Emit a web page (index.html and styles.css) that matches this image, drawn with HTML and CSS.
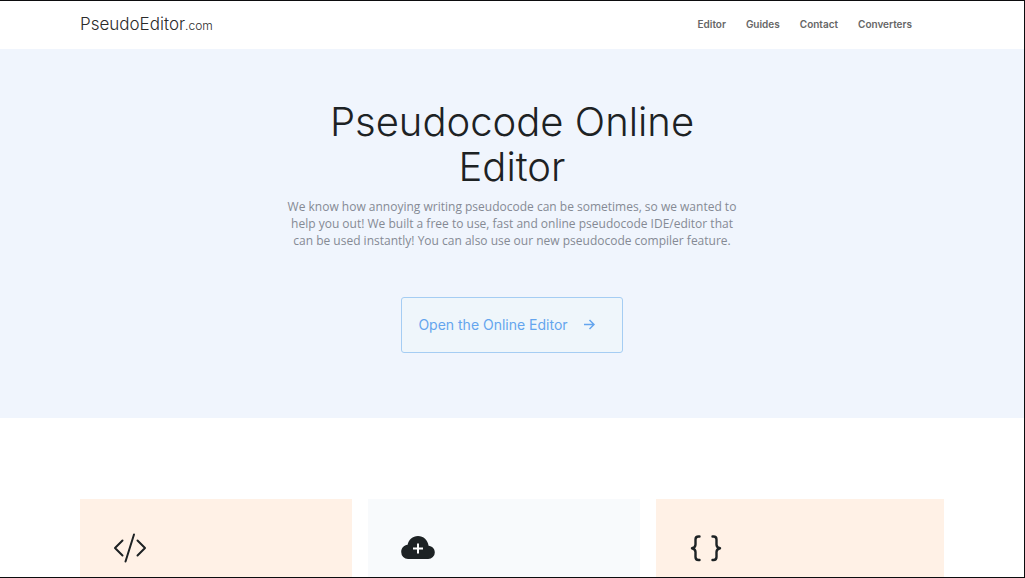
FILE: index.html
```
<!DOCTYPE html>
<html lang="en">
<head>
	<meta charset="utf-8">
	<meta name="viewport" content="width=device-width, initial-scale=1">
	<title>PseudoEditor.com | Pseudocode Online Editor</title>
	<link rel="stylesheet" href="styles.css">
</head>
<body>
	<header class="header">
		<div class="container header-inner">
			<a href="#" class="logo">PseudoEditor<span class="logo-small">.com</span></a>
			<nav class="nav">
				<a href="#">Editor</a>
				<a href="#">Guides</a>
				<a href="#">Contact</a>
				<a href="#">Converters</a>
			</nav>
		</div>
	</header>

	<section class="hero">
		<h1>Pseudocode Online<br>Editor</h1>
		<p>We know how annoying writing pseudocode can be sometimes, so we wanted to<br>
		help you out! We built a free to use, fast and online pseudocode IDE/editor that<br>
		can be used instantly! You can also use our new pseudocode compiler feature.</p>
		<a href="#" class="btn">
			<span>Open the Online Editor</span>
			<svg class="arrow" viewBox="0 0 12 12" aria-hidden="true">
				<path d="M1 6.5H10.5M6.5 2L11 6.5L6.5 11"/>
			</svg>
		</a>
	</section>

	<main class="features">
		<div class="container cards">
			<div class="card card-peach">
				<svg class="icon" viewBox="0 0 34 34" aria-hidden="true">
					<path d="M9.5 9.5L2 17L9.5 24.5M24.5 9.5L32 17L24.5 24.5M21 3.5L12.5 30.5"/>
				</svg>
			</div>
			<div class="card card-grey">
				<svg class="icon" viewBox="0 0 34 34" aria-hidden="true">
					<path class="cloud" d="M7 28A6.8 7 0 0 1 .2 21C.2 17 3 14.2 6.6 13.8C7.6 8.6 11.6 5 17 5C22.4 5 27 9.2 27.6 14.8C31 15.2 33.8 17.8 33.8 21.4A6.6 6.6 0 0 1 27.2 28Z"/>
					<path class="plus" d="M17 12.5V22.5M12 17.5H22"/>
				</svg>
			</div>
			<div class="card card-peach">
				<svg class="icon thick" viewBox="0 0 34 34" aria-hidden="true">
					<path d="M10.5 5.5H9.5Q6.5 5.5 6.5 8.5V13.5Q6.5 16.5 3 17.2Q6.5 17.9 6.5 21V26Q6.5 29 9.5 29H10.5M23.5 5.5H24.5Q27.5 5.5 27.5 8.5V13.5Q27.5 16.5 31 17.2Q27.5 17.9 27.5 21V26Q27.5 29 24.5 29H23.5"/>
				</svg>
			</div>
		</div>
	</main>
</body>
</html>
```
FILE: styles.css
```
*{
	box-sizing: border-box;
}
body{
	margin: 0;
	height: 100vh;
	overflow: hidden;
	display: flex;
	flex-direction: column;
	border: 1px solid #0c0c0e;
	border-left: none;
	background: #fff;
	color: #1d2224;
	font-family: Inter, "Open Sans", sans-serif;
}
a{
	text-decoration: none;
}
.container{
	width: 100%;
	padding: 0 80px;
}

/* top bar */
.header{
	flex: none;
}
.header-inner{
	display: flex;
	align-items: center;
	justify-content: space-between;
	height: 48px;
	padding-bottom: 2px;
}
.logo{
	color: #2b2b2b;
	font-size: 17px;
	font-weight: 300;
}
.logo-small{
	font-size: 12px;
}
.nav{
	display: flex;
	gap: 20px;
	padding-right: 32px;
}
.nav a{
	color: #666;
	font-size: 10px;
	font-weight: 600;
}

/* hero */
.hero{
	flex: none;
	padding: 50px 16px 65px;
	background: #f0f5fd;
	text-align: center;
}
h1{
	margin: 0 0 9px;
	font-size: 40px;
	line-height: 45px;
	font-weight: 300;
}
.hero p{
	margin: 0 0 48px;
	color: #858a94;
	font-family: "Open Sans", sans-serif;
	font-size: 12px;
	line-height: 17px;
}
.btn{
	display: inline-flex;
	align-items: center;
	gap: 15px;
	height: 56px;
	padding: 0 27px 2px 16px;
	border: 1px solid #a5cdf3;
	border-radius: 3px;
	background: #eff6fb;
	color: #64a5ee;
	font-size: 14px;
	vertical-align: top;
}
.btn:hover{
	background: #e3effa;
}
.arrow{
	width: 12px;
	height: 12px;
	fill: none;
	stroke: #64a5ee;
	stroke-width: 1.5;
}

/* feature cards */
.features{
	flex: 1;
	display: flex;
	padding-top: 81px;
}
.cards{
	display: grid;
	grid-template-columns: repeat(3, 1fr);
}
.card{
	margin-right: 16px;
	padding: 32px 33px;
}
.card:last-child{
	margin-right: 0;
}
.card-peach{
	background: #fff1e6;
}
.card-grey{
	background: #f8fafc;
}
.icon{
	display: block;
	width: 34px;
	height: 34px;
	fill: none;
	stroke: #1d2224;
	stroke-width: 2;
	stroke-linecap: round;
	stroke-linejoin: round;
}
.icon.thick{
	stroke-width: 2.4;
}
.icon .cloud{
	fill: #1d2224;
	stroke: none;
}
.icon .plus{
	stroke: #fff;
	stroke-linecap: butt;
}
```
